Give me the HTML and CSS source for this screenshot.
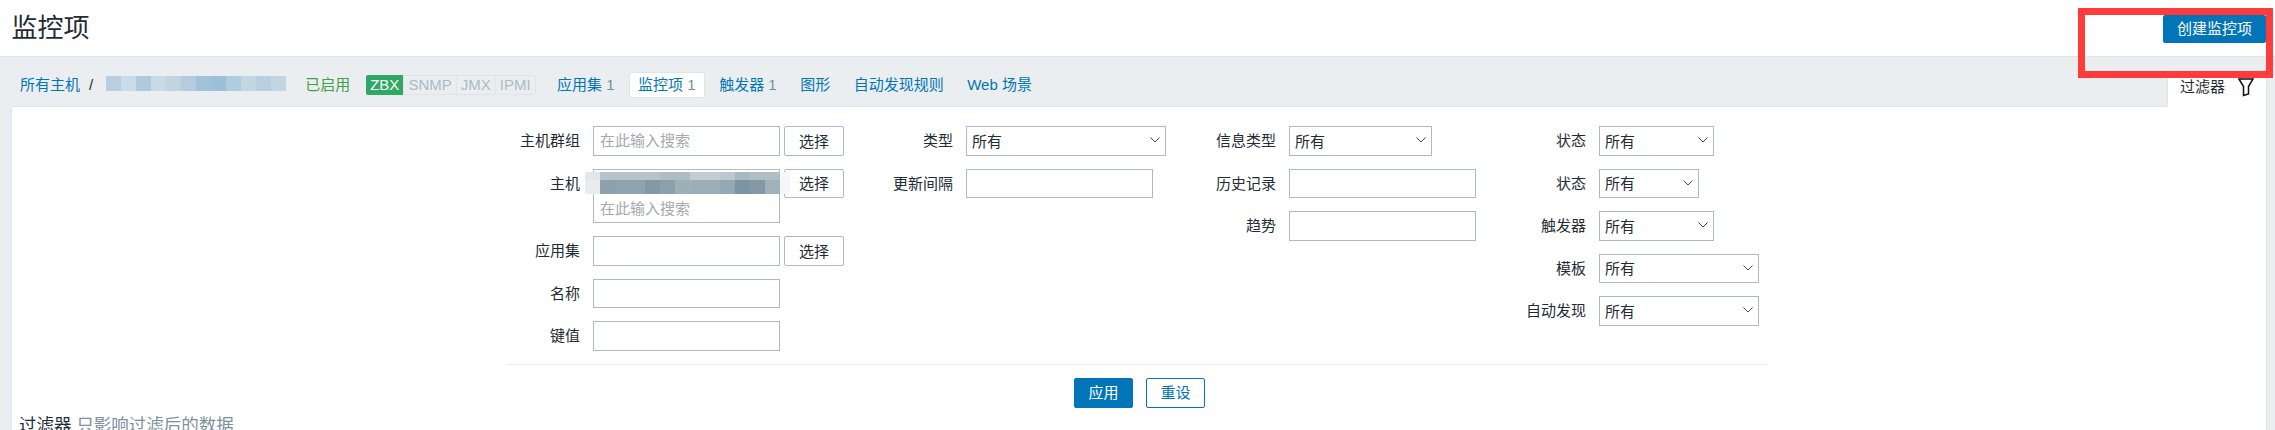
FILE: index.html
```html
<!DOCTYPE html>
<html lang="zh-CN">
<head>
<meta charset="utf-8">
<title>监控项</title>
<link rel="stylesheet" href="styles.css">
</head>
<body>
<header class="page-header">
  <h1 class="page-title">监控项</h1>
  <button class="create-btn" type="button">创建监控项</button>
</header>

<nav class="host-nav">
  <div class="nav-row">
    <a class="crumb" href="#">所有主机</a>
    <span class="crumb-sep">/</span>
    <span class="mosaic-name"></span>
    <span class="status-on">已启用</span>
    <span class="badges">
      <span class="badge badge-on">ZBX</span><span class="badge">SNMP</span><span class="badge">JMX</span><span class="badge">IPMI</span>
    </span>
    <ul class="nav-links">
      <li class="nav-item"><a href="#">应用集</a> <sup class="count">1</sup></li>
      <li class="nav-item is-active"><a href="#">监控项</a> <sup class="count">1</sup></li>
      <li class="nav-item"><a href="#">触发器</a> <sup class="count">1</sup></li>
      <li class="nav-item"><a href="#">图形</a></li>
      <li class="nav-item"><a href="#">自动发现规则</a></li>
      <li class="nav-item"><a href="#">Web 场景</a></li>
    </ul>
  </div>
  <div class="filter-tab">
    <span>过滤器</span>
    <svg class="funnel" width="16" height="20" viewBox="0 0 16 20" aria-hidden="true"><path d="M1 2 L5.500 9.500 V18.500 L10.500 17 V9.500 L15 2 Z" fill="none" stroke="#111" stroke-width="1.500" stroke-linejoin="miter"/></svg>
  </div>
</nav>

<main class="panel">
  <form class="filter-form">
    <div class="columns">
      <div class="col col-1">
        <label class="lbl">主机群组</label>
        <div class="ctrl"><input class="field w-187" placeholder="在此输入搜索"><button class="pick" type="button">选择</button></div>

        <label class="lbl">主机</label>
        <div class="ctrl ctrl-multi">
          <div class="multi">
            <span class="multi-chip"></span>
            <input class="multi-input" placeholder="在此输入搜索">
          </div>
          <button class="pick" type="button">选择</button>
          <span class="mosaic-host"></span>
        </div>

        <label class="lbl">应用集</label>
        <div class="ctrl"><input class="field w-187"><button class="pick" type="button">选择</button></div>

        <label class="lbl">名称</label>
        <div class="ctrl"><input class="field w-187"></div>

        <label class="lbl">键值</label>
        <div class="ctrl"><input class="field w-187"></div>
      </div>

      <div class="col col-2">
        <label class="lbl">类型</label>
        <div class="ctrl"><span class="sel w-200"><select><option>所有</option></select><svg class="chev" width="10" height="6" viewBox="0 0 10 6"><path d="M.5.5 5 5 9.500.5" fill="none" stroke="#3d4a54" stroke-width="1"/></svg></span></div>
        <label class="lbl">更新间隔</label>
        <div class="ctrl"><input class="field w-187"></div>
      </div>

      <div class="col col-3">
        <label class="lbl">信息类型</label>
        <div class="ctrl"><span class="sel w-143"><select><option>所有</option></select><svg class="chev" width="10" height="6" viewBox="0 0 10 6"><path d="M.5.5 5 5 9.500.5" fill="none" stroke="#3d4a54" stroke-width="1"/></svg></span></div>
        <label class="lbl">历史记录</label>
        <div class="ctrl"><input class="field w-187"></div>
        <label class="lbl">趋势</label>
        <div class="ctrl"><input class="field w-187"></div>
      </div>

      <div class="col col-4">
        <label class="lbl">状态</label>
        <div class="ctrl"><span class="sel w-115"><select><option>所有</option></select><svg class="chev" width="10" height="6" viewBox="0 0 10 6"><path d="M.5.5 5 5 9.500.5" fill="none" stroke="#3d4a54" stroke-width="1"/></svg></span></div>
        <label class="lbl">状态</label>
        <div class="ctrl"><span class="sel w-100"><select><option>所有</option></select><svg class="chev" width="10" height="6" viewBox="0 0 10 6"><path d="M.5.5 5 5 9.500.5" fill="none" stroke="#3d4a54" stroke-width="1"/></svg></span></div>
        <label class="lbl">触发器</label>
        <div class="ctrl"><span class="sel w-115"><select><option>所有</option></select><svg class="chev" width="10" height="6" viewBox="0 0 10 6"><path d="M.5.5 5 5 9.500.5" fill="none" stroke="#3d4a54" stroke-width="1"/></svg></span></div>
        <label class="lbl">模板</label>
        <div class="ctrl"><span class="sel w-160"><select><option>所有</option></select><svg class="chev" width="10" height="6" viewBox="0 0 10 6"><path d="M.5.5 5 5 9.500.5" fill="none" stroke="#3d4a54" stroke-width="1"/></svg></span></div>
        <label class="lbl">自动发现</label>
        <div class="ctrl"><span class="sel w-160"><select><option>所有</option></select><svg class="chev" width="10" height="6" viewBox="0 0 10 6"><path d="M.5.5 5 5 9.500.5" fill="none" stroke="#3d4a54" stroke-width="1"/></svg></span></div>
      </div>
    </div>

    <div class="form-actions">
      <button class="btn btn-primary" type="button">应用</button>
      <button class="btn btn-outline" type="button">重设</button>
    </div>
  </form>

  <p class="filter-note"><span class="note-title">过滤器</span> <span class="note-text">只影响过滤后的数据</span></p>
</main>

<div class="annotation" aria-hidden="true"></div>
</body>
</html>
```

FILE: styles.css
```css
* { box-sizing: border-box; }

html, body {
  margin: 0;
  height: 430px;
  overflow: hidden;
}

body {
  position: relative;
  background: #ebeef0;
  color: #1f2c33;
  font: 15px/18px "Liberation Sans", "Noto Sans CJK SC", sans-serif;
}

a { color: #0275b8; text-decoration: none; }

/* header */
.page-header {
  display: flex;
  align-items: flex-start;
  justify-content: space-between;
  height: 57px;
  padding: 15px 9px 0 11.5px;
  background: #fff;
  border-bottom: 1px solid #dfe4e7;
}

.page-title {
  margin: -3px 0 0;
  font-size: 26px;
  line-height: 32px;
  font-weight: 400;
  color: #1f2c33;
}

.create-btn {
  width: 103px;
  height: 28px;
  padding: 0;
  border: 0;
  border-radius: 2px;
  background: #0275b8;
  color: #fff;
  font: inherit;
}

/* host navigation */
.host-nav {
  display: flex;
  justify-content: space-between;
  align-items: flex-end;
  height: 49px;
  padding: 0 8px 0 20px;
}

.nav-row {
  display: flex;
  align-items: center;
  align-self: flex-start;
  height: 26px;
  margin-top: 15px;
}

.crumb-sep { margin: 0 13px 0 9px; color: #1f2c33; }

.mosaic-name {
  width: 180px;
  height: 15px;
  margin: -4px 19px 0 0;
  background: linear-gradient(90deg,
    #b9cfe0 0 15px, #c9dbe6 15px 30px, #b1c9dc 30px 45px, #c9dae5 45px 60px,
    #c0d4e2 60px 75px, #b5cce0 75px 90px, #a0c2da 90px 105px, #9cc0d9 105px 120px,
    #aecde0 120px 135px, #c3d7e3 135px 150px, #b8cfe2 150px 165px, #c1d5e3 165px 180px);
}

.status-on { color: #429e47; margin-right: 16px; }

.badges {
  display: flex;
  height: 20px;
  border: 1px solid #dfe4e7;
  border-radius: 2px;
  margin-right: 12px;
}

.badge {
  padding: 0 4px;
  line-height: 18px;
  color: #acbbc2;
  border-left: 1px solid #dfe4e7;
}

.badge-on {
  margin: -1px 0 -1px -1px;
  padding: 1px 4px;
  border: 0;
  border-radius: 2px 0 0 2px;
  background: #2fa864;
  color: #fff;
}

.nav-links {
  display: flex;
  gap: 4.5px;
  margin: 0;
  padding: 0;
  list-style: none;
}

.nav-item {
  height: 26px;
  padding: 0 8.5px;
  line-height: 24px;
  border: 1px solid transparent;
  border-radius: 2px;
  white-space: nowrap;
}

.nav-item.is-active {
  background: #fff;
  border-color: #dfe4e7;
}

.count {
  vertical-align: baseline;
  font-size: 15px;
  line-height: 1;
  color: #768d99;
}

.filter-tab {
  display: flex;
  align-items: center;
  gap: 13px;
  width: 100px;
  height: 37px;
  margin-bottom: -1px;
  padding: 0 0 5px 12px;
  background: #fff;
  border: 1px solid #dfe4e7;
  border-bottom: 0;
  position: relative;
  z-index: 1;
}

/* content panel */
.panel {
  margin: 0 8px 0 11px;
  height: 330px;
  padding-top: 19px;
  background: #fff;
  border: 1px solid #dfe4e7;
  border-width: 1px 1px 0 1px;
}

.filter-form {
  width: 1261px;
  margin-left: 495px;
}

.columns { display: flex; }

.col {
  display: grid;
  align-content: start;
  column-gap: 13px;
  row-gap: 13px;
  grid-auto-rows: min-content;
}

.col-1 { width: 353px; grid-template-columns: 73px 1fr; }
.col-2 { width: 330px; grid-template-columns: 93px 1fr; }
.col-3 { width: 320px; grid-template-columns: 86px 1fr; }
.col-4 { width: 258px; grid-template-columns: 76px 1fr; }

.lbl {
  height: 29.5px;
  line-height: 29px;
  text-align: right;
  white-space: nowrap;
}

.ctrl {
  position: relative;
  display: flex;
  align-items: flex-start;
  gap: 4px;
}

.field, .multi, .sel select {
  border: 1px solid #acbbc2;
  background: #fff;
  color: #1f2c33;
  font: inherit;
  border-radius: 0;
  outline: 0;
}

.field { height: 29.5px; padding: 0 6px; }

::placeholder { color: #a5a9ad; opacity: 1; }

.w-187 { width: 187px; }
.w-200 { width: 200px; }
.w-143 { width: 143px; }
.w-115 { width: 115px; }
.w-100 { width: 100px; }
.w-160 { width: 160px; }

.pick {
  width: 60px;
  height: 29.5px;
  padding: 2px 0 0;
  border: 1px solid #acbbc2;
  border-radius: 2px;
  background: #fff;
  color: #1f2c33;
  font: inherit;
}

.multi {
  display: flex;
  flex-direction: column;
  width: 187px;
  height: 54.5px;
}

.multi-chip { height: 26px; flex: none; }

.multi-input {
  width: 100%;
  height: 26px;
  padding: 0 6px;
  border: 0;
  background: transparent;
  font: inherit;
  outline: 0;
}

.mosaic-host {
  position: absolute;
  top: 3.5px;
  left: -8px;
  width: 205px;
  height: 22px;
  border-radius: 2px;
  background:
    linear-gradient(90deg,
      #e3e7ea 0 15px,
      #b7c3ca 15px 75px, #aebcc4 75px 105px, #c3ced3 105px 135px, #bcc8ce 135px 150px,
      #a9b9c1 150px 165px, #b0bfc6 165px 195px, #f4f6f7 195px 205px) 0 0 / 100% 8px no-repeat,
    linear-gradient(90deg,
      #e9ecee 0 15px,
      #8ba1ad 15px 30px, #8fa4af 30px 60px, #829aa7 60px 75px, #8aa0ac 75px 90px,
      #9bb0b9 90px 105px, #9cafb8 105px 135px, #95a9b3 135px 150px, #7c93a1 150px 165px,
      #8399a6 165px 180px, #9fb1ba 180px 195px, #f4f6f7 195px 205px) 0 8px / 100% 14px no-repeat;
}

.sel { position: relative; display: block; }

.sel select {
  display: block;
  width: 100%;
  height: 29.5px;
  padding: 2px 20px 0 5px;
  appearance: none;
  -webkit-appearance: none;
}

.chev {
  position: absolute;
  top: 11px;
  right: 6px;
  pointer-events: none;
}

/* footer */
.form-actions {
  display: flex;
  justify-content: center;
  gap: 13px;
  margin-top: 13.5px;
  padding: 12.500px 0 0 4px;
  border-top: 1px solid #ebeef0;
}

.btn {
  width: 59px;
  height: 30px;
  padding: 0;
  border: 1px solid #0275b8;
  border-radius: 2px;
  font: inherit;
}

.btn-primary { background: #0275b8; color: #fff; }
.btn-outline { background: #fff; color: #0275b8; }

.filter-note {
  margin: 7px 0 0 7px;
  font-size: 17.5px;
  line-height: 20px;
}

.note-text { color: #7d909e; }

/* hand-drawn red box lying over the screenshot */
.annotation {
  position: absolute;
  top: 8px;
  left: 2078px;
  width: 195px;
  height: 70px;
  border: 7px solid #ff3b3b;
  z-index: 2;
  pointer-events: none;
}
```
